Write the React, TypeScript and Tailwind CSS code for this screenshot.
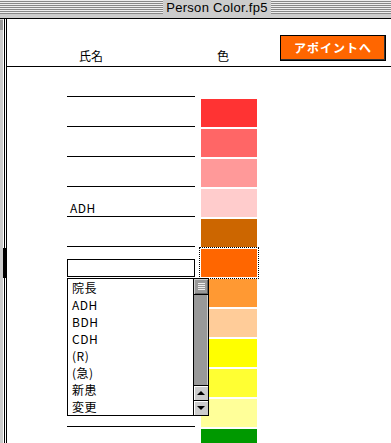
import React from "react";

const stripeRows = [0, 1, 2, 3, 4, 5, 6, 7, 8, 9, 10, 11, 12, 13];

function Stripes({ cls }: { cls: string }) {
  return (
    <div className={cls}>
      {stripeRows.map((i) => (
        <div key={i} className={i % 2 === 0 ? "h-[1px] bg-[#eeeeee]" : "h-[1px] bg-[#888888]"} />
      ))}
    </div>
  );
}

type Row = { color: string | null; text?: string; active?: boolean };

const rows: Row[] = [
  { color: null },
  { color: "bg-[#ff3333]" },
  { color: "bg-[#ff6666]" },
  { color: "bg-[#ff9999]" },
  { color: "bg-[#ffcccc]", text: "ADH" },
  { color: "bg-[#cc6600]" },
  { color: "bg-[#ff6600]", active: true },
  { color: "bg-[#ff9933]" },
  { color: "bg-[#ffcc99]" },
  { color: "bg-[#ffff00]" },
  { color: "bg-[#ffff33]" },
  { color: "bg-[#ffff99]" },
  { color: "bg-[#009900]" },
];

const items = ["院長", "ADH", "BDH", "CDH", "(R)", "(急)", "新患", "変更"];

export default function App() {
  return (
    <div className="w-[391px] h-[443px] overflow-hidden bg-white relative flex flex-col font-['Noto_Sans_CJK_JP','Liberation_Sans',sans-serif] text-black">
      {/* Title bar */}
      <div className="h-[18px] bg-[#cccccc] border-b border-black flex items-start shrink-0 box-content">
        <Stripes cls="w-[163px] shrink-0 flex flex-col" />
        <div className="w-[108px] shrink-0 text-center text-[13px] leading-[15px] tracking-[0.3px] font-['Liberation_Sans',sans-serif] text-black">
          Person Color.fp5
        </div>
        <Stripes cls="flex-1 flex flex-col" />
      </div>

      <div className="flex flex-1 min-h-0">
        {/* Left edge */}
        <div className="flex shrink-0">
          <div className="w-[3px] bg-[#cccccc]" />
          <div className="w-[1px] bg-white" />
          <div className="w-[1px] bg-black" />
          <div className="w-[1px] bg-white" />
          <div className="w-[1px] bg-black" />
        </div>

        {/* Main */}
        <div className="flex-1 flex flex-col min-w-0">
          <div className="h-[47px] border-b border-black flex items-start shrink-0 box-content">
            <span className="ml-[72px] mt-[29px] text-[12px] leading-[16px]">氏名</span>
            <span className="ml-[114px] mt-[29px] text-[12px] leading-[16px]">色</span>
            <div className="ml-[51px] mt-[16px] w-[106px] h-[26px] border border-black bg-[#ff6600] shadow-[inset_-1px_-1px_0_#333333] flex items-center justify-center text-white font-bold text-[12px] leading-[16px] tracking-[1px]">
              アポイントへ
            </div>
          </div>

          {rows.map((r, i) => (
            <div key={i} className="h-[30px] flex shrink-0">
              {r.active ? (
                <div className="ml-[60px] w-[128px] h-[30px] pt-[12px]">
                  <div className="h-[18px] border border-black bg-white" />
                </div>
              ) : (
                <div className="ml-[60px] w-[128px] h-[30px] border-b border-black flex items-end pl-[3px] pb-[1px] text-[12px] leading-[14px] tracking-[0.5px]">
                  {r.text ?? ""}
                </div>
              )}
              {r.color ? (
                <div
                  className={
                    r.active
                      ? `ml-[6px] mt-[2px] w-[56px] h-[28px] ${r.color} outline-1 outline-dotted outline-black outline-offset-1`
                      : `ml-[6px] mt-[2px] w-[56px] h-[28px] ${r.color}`
                  }
                />
              ) : (
                <div className="ml-[6px] mt-[2px] w-[56px] h-[28px]" />
              )}
            </div>
          ))}
        </div>
      </div>

      {/* Overlays on left edge */}
      <div className="absolute left-0 top-[20px] w-[3px] h-[10px] bg-[#999999]" />
      <div className="absolute left-[3px] top-[248px] w-[4px] h-[30px] bg-black" />

      {/* Dropdown list */}
      <div className="absolute left-[67px] top-[278px] w-[142px] h-[138px] border border-black bg-white flex">
        <div className="flex-1 pl-[4px] flex flex-col">
          {items.map((t) => (
            <div key={t} className="h-[17px] text-[12px] leading-[17px] whitespace-nowrap tracking-[0.5px]">
              {t}
            </div>
          ))}
        </div>
        <div className="w-[15px] border-l border-black flex flex-col">
          <div className="h-[16px] border-b border-black bg-[#999999] shadow-[inset_1px_1px_0_#cccccc,inset_-1px_-1px_0_#666666] flex flex-col items-center justify-center gap-[1px]">
            <div className="w-[7px] h-[1px] bg-[#eeeeee]" />
            <div className="w-[7px] h-[1px] bg-[#eeeeee]" />
            <div className="w-[7px] h-[1px] bg-[#eeeeee]" />
            <div className="w-[7px] h-[1px] bg-[#eeeeee]" />
          </div>
          <div className="flex-1 bg-[#999999] border-b border-black shadow-[inset_-1px_0_0_#cccccc]" />
          <div className="h-[15px] border-b border-black bg-[#cccccc] shadow-[inset_1px_1px_0_#ffffff] flex items-center justify-center">
            <div className="w-0 h-0 border-x-[4px] border-x-transparent border-b-[4px] border-b-black" />
          </div>
          <div className="h-[14px] bg-[#cccccc] shadow-[inset_1px_1px_0_#ffffff] flex items-center justify-center">
            <div className="w-0 h-0 border-x-[4px] border-x-transparent border-t-[4px] border-t-black" />
          </div>
        </div>
      </div>
    </div>
  );
}
